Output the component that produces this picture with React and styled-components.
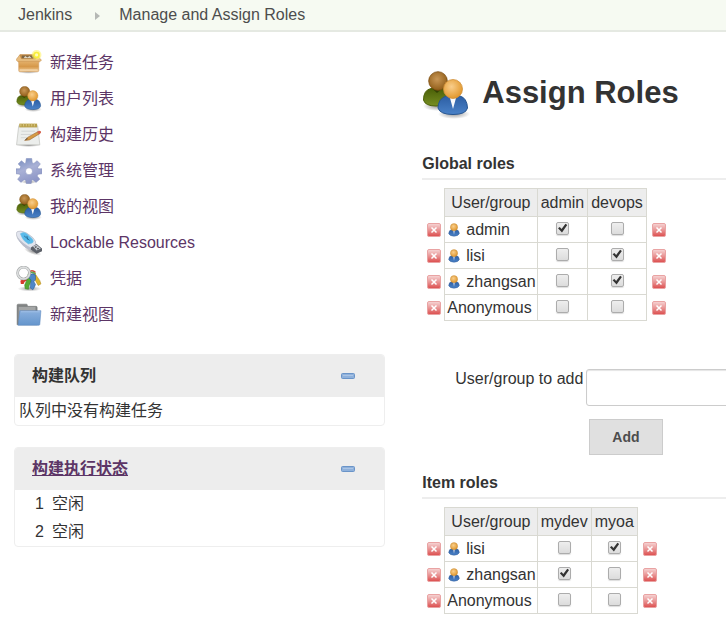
import { useState } from "react";
import styled, { createGlobalStyle } from "styled-components";

const tasks = [
  { icon: "package", label: "新建任务" },
  { icon: "users", label: "用户列表" },
  { icon: "notepad", label: "构建历史" },
  { icon: "gear", label: "系统管理" },
  { icon: "users", label: "我的视图" },
  { icon: "usb", label: "Lockable Resources" },
  { icon: "keys", label: "凭据" },
  { icon: "folder", label: "新建视图" },
];

const executors = ["空闲", "空闲"];

const globalRoles = {
  roles: ["admin", "devops"],
  users: [
    { name: "admin", granted: ["admin"] },
    { name: "lisi", granted: ["devops"] },
    { name: "zhangsan", granted: ["devops"] },
    { name: "Anonymous", anonymous: true, granted: [] },
  ],
};

const itemRoles = {
  roles: ["mydev", "myoa"],
  users: [
    { name: "lisi", granted: ["myoa"] },
    { name: "zhangsan", granted: ["mydev"] },
    { name: "Anonymous", anonymous: true, granted: [] },
  ],
};

export default function App() {
  return (
    <>
      <GlobalStyle />
      <Gradients />
      <Breadcrumbs aria-label="breadcrumb">
        <Crumb href="#jenkins">Jenkins</Crumb>
        <CrumbArrow viewBox="0 0 6 8" aria-hidden="true">
          <path d="M0 0 L5 4 L0 8 Z" fill="#b5b8b5" />
        </CrumbArrow>
        <Crumb href="#roles">Manage and Assign Roles</Crumb>
      </Breadcrumbs>

      <Page>
        <Sidebar>
          <TaskList>
            {tasks.map((task, i) => (
              <li key={i}>
                <TaskLink href="#task">
                  <TaskIcon name={task.icon} />
                  {task.label}
                </TaskLink>
              </li>
            ))}
          </TaskList>

          <Pane>
            <PaneHeader>
              <PaneTitle>构建队列</PaneTitle>
              <Collapse />
            </PaneHeader>
            <PaneText>队列中没有构建任务</PaneText>
          </Pane>

          <Pane>
            <PaneHeader>
              <PaneTitle>
                <a href="#executors">构建执行状态</a>
              </PaneTitle>
              <Collapse />
            </PaneHeader>
            <ExecutorList>
              {executors.map((state, i) => (
                <Executor key={i}>
                  <span>{i + 1}</span>
                  <span>{state}</span>
                </Executor>
              ))}
            </ExecutorList>
          </Pane>
        </Sidebar>

        <Main>
          <Title>
            <TitleIcon viewBox="0 0 48 48" aria-hidden="true">
              <UsersShape />
            </TitleIcon>
            Assign Roles
          </Title>

          <SectionTitle>Global roles</SectionTitle>
          <RoleTable {...globalRoles} />
          <AddUser />

          <SectionTitle>Item roles</SectionTitle>
          <RoleTable {...itemRoles} />
        </Main>
      </Page>
    </>
  );
}

function RoleTable({ roles, users }) {
  const [rows, setRows] = useState(users);

  const remove = (name) => setRows(rows.filter((row) => row.name !== name));

  return (
    <Table>
      <thead>
        <tr>
          <EdgeCell />
          <HeadCell scope="col">User/group</HeadCell>
          {roles.map((role) => (
            <HeadCell key={role} scope="col">{role}</HeadCell>
          ))}
          <EdgeCell />
        </tr>
      </thead>
      <tbody>
        {rows.map((row) => (
          <tr key={row.name}>
            <EdgeCell>
              <RemoveButton name={row.name} onClick={() => remove(row.name)} />
            </EdgeCell>
            <Cell>
              <UserName>
                {!row.anonymous && (
                  <UserIcon viewBox="0 0 16 16" aria-hidden="true">
                    <path d="M2 12 Q2 8 6 7.500 H10 Q14 8 14 12 Q13 15 8 15 Q3 15 2 12Z" fill="url(#blueCoat)" stroke="#35609c" strokeWidth=".6" />
                    <path d="M6.800 8 H9.200 L8 13Z" fill="#c9d3e4" />
                    <circle cx="8" cy="4.800" r="4.100" fill="url(#orangeHead)" stroke="#c08a3a" strokeWidth=".5" />
                  </UserIcon>
                )}
                {row.name}
              </UserName>
            </Cell>
            {roles.map((role) => (
              <CheckCell key={role}>
                <Checkbox
                  type="checkbox"
                  aria-label={`${row.name} ${role}`}
                  defaultChecked={row.granted.includes(role)}
                />
              </CheckCell>
            ))}
            <EdgeCell>
              <RemoveButton name={row.name} onClick={() => remove(row.name)} />
            </EdgeCell>
          </tr>
        ))}
      </tbody>
    </Table>
  );
}

function AddUser() {
  return (
    <AddForm onSubmit={(e) => e.preventDefault()}>
      <label htmlFor="add-user">User/group to add</label>
      <TextInput id="add-user" type="text" />
      <AddButton type="submit">Add</AddButton>
    </AddForm>
  );
}

function RemoveButton({ name, onClick }) {
  return (
    <IconButton type="button" aria-label={`Remove ${name}`} onClick={onClick}>
      <svg width="14" height="14" viewBox="0 0 14 14">
        <rect x=".5" y=".5" width="13" height="13" rx="1.5" fill="url(#removeRed)" stroke="#e9a3a3" />
        <path d="M4.5 4.5 L9.5 9.5 M9.5 4.5 L4.5 9.5" stroke="#fff" strokeWidth="1.500" />
      </svg>
    </IconButton>
  );
}

function Collapse() {
  return (
    <IconButton type="button" aria-label="collapse">
      <svg width="14" height="6" viewBox="0 0 14 6">
        <rect x=".5" y=".5" width="13" height="5" rx="1" fill="#8fb1db" stroke="#6a94c8" />
        <path d="M2 2.5 H12" stroke="#abc5e6" />
      </svg>
    </IconButton>
  );
}

// gradients shared by every icon on the page
function Gradients() {
  return (
    <HiddenSvg width="0" height="0" aria-hidden="true">
      <defs>
        <radialGradient id="brownHead" cx=".45" cy=".4" r=".6">
          <stop offset="0" stopColor="#c99756" />
          <stop offset="1" stopColor="#915e19" />
        </radialGradient>
        <radialGradient id="orangeHead" cx=".42" cy=".38" r=".6">
          <stop offset="0" stopColor="#f9ce8b" />
          <stop offset="1" stopColor="#e29a31" />
        </radialGradient>
        <linearGradient id="greenCoat" x2="0" y2="1">
          <stop offset="0" stopColor="#4a5f07" />
          <stop offset="1" stopColor="#768e22" />
        </linearGradient>
        <linearGradient id="blueCoat" x2="0" y2="1">
          <stop offset="0" stopColor="#2c5ea3" />
          <stop offset="1" stopColor="#4a82c8" />
        </linearGradient>
        <linearGradient id="removeRed" x2="0" y2="1">
          <stop offset="0" stopColor="#f6d6d6" />
          <stop offset=".5" stopColor="#e99595" />
          <stop offset="1" stopColor="#dc4c4c" />
        </linearGradient>
        <linearGradient id="boxFront" x2="0" y2="1">
          <stop offset="0" stopColor="#e3b06a" />
          <stop offset=".5" stopColor="#d6984a" />
          <stop offset="1" stopColor="#f1cd9a" />
        </linearGradient>
        <linearGradient id="gearFill" x2=".4" y2="1">
          <stop offset="0" stopColor="#7189bd" />
          <stop offset=".5" stopColor="#a9b1d6" />
          <stop offset="1" stopColor="#8d96c6" />
        </linearGradient>
        <linearGradient id="folderFill" x2="0" y2="1">
          <stop offset="0" stopColor="#8bb0de" />
          <stop offset="1" stopColor="#6495cc" />
        </linearGradient>
        <radialGradient id="softShadow">
          <stop offset="0" stopColor="#555" stopOpacity=".6" />
          <stop offset="1" stopColor="#555" stopOpacity="0" />
        </radialGradient>
      </defs>
    </HiddenSvg>
  );
}

function UsersShape() {
  return (
    <>
      <ellipse cx="15" cy="35" rx="14" ry="5" fill="url(#softShadow)" />
      <ellipse cx="32" cy="43" rx="16" ry="5" fill="url(#softShadow)" />
      <path d="M1.500 29 Q1.500 19 9 17.500 H22 Q28 19 29 29 Q27 35 14 35 Q3 35 1.500 29Z" fill="url(#greenCoat)" stroke="#4c6008" />
      <path d="M10 17.500 H20 L15 22Z" fill="#334204" />
      <circle cx="16" cy="10" r="9.300" fill="url(#brownHead)" stroke="#7d4e10" strokeWidth=".8" />
      <path d="M16 37 Q16 28 24 25 H38 Q45 27 45.500 37 Q44 43.500 31 43.500 Q18 43.500 16 37Z" fill="url(#blueCoat)" stroke="#265590" />
      <path d="M28 27 H34 L31 38Z" fill="#f8fafc" />
      <circle cx="31" cy="18" r="9.500" fill="url(#orangeHead)" stroke="#d0913a" strokeWidth=".8" />
    </>
  );
}

const taskShapes = {
  users: <UsersShape />,
  package: (
    <>
      <ellipse cx="23" cy="40" rx="20" ry="4" fill="url(#softShadow)" />
      <path d="M7 8 H39 L42 15 V20 H5Z" fill="#c48d48" />
      <path d="M11 10 H34 L36 16 H10Z" fill="#7d6543" />
      <path d="M14 15 L17 11 L21 14 L25 11 L29 15Z" fill="#ddd5c2" />
      <path d="M7 9 L0 18 L4 22 H43 L47 19 L40 11 L37 16 H10Z" fill="#e8bd80" stroke="#c48c45" />
      <path d="M5 21 H42 V38 Q42 40 40 40 H7 Q5 40 5 38Z" fill="url(#boxFront)" stroke="#cf9755" />
      <path d="M7 37 H40" stroke="#f6dcb6" strokeWidth="2" />
      <circle cx="38" cy="9" r="9" fill="#fff36a" opacity=".6" />
      <circle cx="38" cy="9" r="6" fill="#f9ee3a" />
      <circle cx="38" cy="9" r="3" fill="#fffbb8" />
    </>
  ),
  notepad: (
    <>
      <ellipse cx="23" cy="43" rx="23" ry="3" fill="url(#softShadow)" />
      <path d="M5 7 H40 L44 42 H1Z" fill="#eceeec" stroke="#b0b2ae" />
      <path d="M6 3 H39 V10 H6Z" fill="#b8a04c" />
      <path d="M9 3 V8 M14 3 V8 M19 3 V8 M24 3 V8 M29 3 V8 M34 3 V8" stroke="#dfcf8d" strokeWidth="1.500" />
      <path d="M10 17 H35 M9 23 H29 M9 29 H20" stroke="#cfd1d0" strokeWidth="1.500" />
      <path d="M16 34 L22 28 L40 18 L43 22 L25 33Z" fill="#d69a44" stroke="#936234" />
      <path d="M39 18 L43 16 Q47 16 46 20 L43 23Z" fill="#d4604a" />
      <path d="M16 34 L22 31 L20 30Z" fill="#443a30" />
    </>
  ),
  gear: (
    <>
      <ellipse cx="24" cy="44" rx="15" ry="4" fill="url(#softShadow)" />
      <path
        fillRule="evenodd"
        fill="url(#gearFill)"
        stroke="#8490bc"
        strokeLinejoin="round"
        d="M19 1 H29 L30 9 L33 10 L39 5 L45 11 L40 17 L41 20 L48 20 V29 L41 30 L39 33 L44 39 L37 45 L31 40 L29 41 L28 47 H19 L18 41 L15 40 L9 45 L3 39 L8 33 L7 30 L0 29 V20 L7 20 L9 16 L4 11 L10 5 L16 10 L18 9Z M24 18 A6.500 6.500 0 1 0 24 31 A6.500 6.500 0 1 0 24 18Z"
      />
    </>
  ),
  usb: (
    <>
      <ellipse cx="31" cy="40" rx="17" ry="5" fill="url(#softShadow)" transform="rotate(20 31 40)" />
      <path d="M0 7 Q1 1 9 2 Q19 3 31 14 Q38 21 37 29 Q33 37 26 37 Q16 33 9 24 Q2 17 0 7Z" fill="#e2e5ee" stroke="#a3a8b5" />
      <path d="M1 11 Q5 21 13 29 Q20 35 26 37 L31 34 Q13 27 1 11Z" fill="#b9bdcb" />
      <path d="M8 7 Q14 2 20 7 L30 16 Q34 21 30 24 L23 26 Q12 20 8 7Z" fill="#58baea" stroke="#79c1e4" />
      <path d="M15 11 L25 19 M20 11 L22 18" stroke="#25678f" strokeWidth="1.500" />
      <path d="M28 32 L38 26 L48 34 V39 L38 44 L27 36Z" fill="#5c6068" />
      <path d="M31 30 L38 27 L46 34 L38 38Z" fill="#bfc4cb" />
      <path d="M35 32 L38 31 M39 35 L42 34" stroke="#333" strokeWidth="2" />
    </>
  ),
  keys: (
    <>
      <ellipse cx="25" cy="42" rx="22" ry="5" fill="url(#softShadow)" />
      <path d="M25 17 L8 27 L9 33 L14 33 L16 29 L28 23Z" fill="#d43a2b" />
      <path d="M24 17 L16 35 L17 42 L23 43 L24 37 L31 22Z" fill="#55aa34" stroke="#3a8423" />
      <path d="M29 17 L36 27 L41 36 L46 33 L44 27 L35 14Z" fill="#dfb52e" stroke="#af8618" />
      <path d="M23 13 Q29 5 36 12" fill="none" stroke="#d44c3a" strokeWidth="3" />
      <path d="M22 16 Q29 8 36 15" fill="none" stroke="#62a450" strokeWidth="3" />
      <path d="M25 17 Q31 12 36 17 L36 25 L33 29 L36 34 L34 39 L31 44 L26 40 L28 26 L24 22Z" fill="#4f87c7" stroke="#2b5a96" />
      <circle cx="14" cy="13" r="11" fill="none" stroke="#a3a6a7" strokeWidth="5" />
      <circle cx="14" cy="13" r="11" fill="none" stroke="#dcdede" strokeWidth="3" />
    </>
  ),
  folder: (
    <>
      <path d="M2 6 Q2 4 4 4 H19 Q21 4 21 6 V8 H37 Q39 8 39 10 V42 H2Z" fill="#808383" stroke="#727575" />
      <path d="M5 9 H36 V38 H5Z" fill="#a4a6a6" />
      <path d="M7 16 H46 L44 41 Q44 43 42 43 H4Z" fill="url(#folderFill)" stroke="#5c88be" />
      <path d="M9 18 H44" stroke="#b6cff0" />
    </>
  ),
};

function TaskIcon({ name }) {
  return (
    <TaskSvg viewBox="0 0 48 48" aria-hidden="true">
      {taskShapes[name]}
    </TaskSvg>
  );
}

const GlobalStyle = createGlobalStyle`
  * {
    box-sizing: border-box;
  }

  body {
    margin: 0;
    overflow-x: hidden;
    background: #fff;
    color: #333;
    font-family: "Liberation Sans", Arial, "Noto Sans CJK SC", sans-serif;
    font-size: 16px;
    line-height: 20px;
  }
`;

const HiddenSvg = styled.svg`
  position: absolute;
`;

const Breadcrumbs = styled.nav`
  display: flex;
  align-items: center;
  height: 32px;
  padding: 0 18px;
  background: #f6faf2;
  border-bottom: 2px solid #e5e9e2;
`;

const Crumb = styled.a`
  color: #4d4d4d;
  text-decoration: none;
`;

const CrumbArrow = styled.svg`
  width: 6px;
  height: 8px;
  margin: 2px 18px 0 23px;
`;

const Page = styled.div`
  display: grid;
  grid-template-columns: minmax(0, 11fr) minmax(0, 9fr);
  gap: 37px;
  padding: 13px 0 0 14px;
`;

const Sidebar = styled.aside`
  display: flex;
  flex-direction: column;
  gap: 21px;
`;

const TaskList = styled.ul`
  margin: 0;
  padding: 0;
  list-style: none;
`;

const TaskLink = styled.a`
  display: flex;
  align-items: center;
  gap: 8px;
  height: 36px;
  padding-left: 2px;
  color: #5c3566;
  text-decoration: none;
`;

const TaskSvg = styled.svg`
  width: 26px;
  height: 26px;
`;

const Pane = styled.section`
  border: 1px solid #eee;
  border-radius: 4px;
  overflow: hidden;
`;

const PaneHeader = styled.header`
  display: flex;
  align-items: center;
  justify-content: space-between;
  height: 42px;
  padding: 0 29px 0 17px;
  background: #ededed;
`;

const PaneTitle = styled.h2`
  margin: 0;
  font-size: 16px;
  font-weight: bold;

  a {
    color: #5c3566;
  }
`;

const PaneText = styled.p`
  margin: 0;
  padding: 4px;
`;

const ExecutorList = styled.ol`
  margin: 0;
  padding: 0 20px;
  list-style: none;
`;

const Executor = styled.li`
  display: flex;
  gap: 8px;
  line-height: 28px;
`;

const IconButton = styled.button`
  display: block;
  padding: 0;
  border: 0;
  background: none;
  cursor: pointer;

  svg {
    display: block;
  }
`;

const Main = styled.main`
  padding-top: 26px;
`;

const Title = styled.h1`
  display: flex;
  gap: 12px;
  height: 48px;
  margin: 0 0 32px;
  font-size: 31px;
  line-height: 44px;
`;

const TitleIcon = styled.svg`
  width: 48px;
  height: 48px;
`;

const SectionTitle = styled.h2`
  margin: 0 0 8px;
  padding: 3px 0 4px;
  border-bottom: 2px solid #ededed;
  font-size: 16px;
`;

const Table = styled.table`
  border-collapse: collapse;
`;

const HeadCell = styled.th`
  height: 28px;
  padding: 0 3px;
  border: 1px solid #d9d9d2;
  background: #ededed;
  font-weight: normal;
  text-align: center;
`;

const Cell = styled.td`
  height: 26px;
  padding: 0 1px 0 2px;
  border: 1px solid #d9d9d2;
`;

const CheckCell = styled(Cell)`
  padding: 0 0 2px;
  text-align: center;
`;

const EdgeCell = styled.td`
  padding: 0 3px 0 5px;
`;

const UserName = styled.span`
  display: flex;
  align-items: center;
  gap: 5px;
`;

const UserIcon = styled.svg`
  width: 14px;
  height: 14px;
`;

const Checkbox = styled.input`
  appearance: none;
  display: block;
  width: 13px;
  height: 13px;
  margin: 0 auto;
  border: 1px solid #acacac;
  border-radius: 2px;
  background: linear-gradient(#eee, #dcdcdc);
  box-shadow: 0 1px 1px #ddd;

  &:checked::before {
    content: "";
    display: block;
    height: 10px;
    background: #333;
    clip-path: polygon(10% 52%, 26% 40%, 42% 60%, 78% 8%, 94% 20%, 46% 94%);
  }
`;

const AddForm = styled.form`
  display: grid;
  grid-template-columns: max-content minmax(320px, 1fr);
  column-gap: 3px;
  row-gap: 13px;
  padding: 48px 0 15px 33px;
`;

const TextInput = styled.input`
  height: 37px;
  padding: 6px 8px;
  border: 1px solid #ccc;
  border-radius: 3px;
  box-shadow: inset 0 1px 1px #e5e5e5;
  font: inherit;
`;

const AddButton = styled.button`
  grid-column: 2;
  justify-self: start;
  height: 36px;
  margin-left: 3px;
  padding: 0 22px;
  border: 1px solid #ccc;
  background: #e0e0e0;
  color: #4d4d4d;
  font: bold 14px "Liberation Sans", Arial, sans-serif;
  cursor: pointer;
`;
